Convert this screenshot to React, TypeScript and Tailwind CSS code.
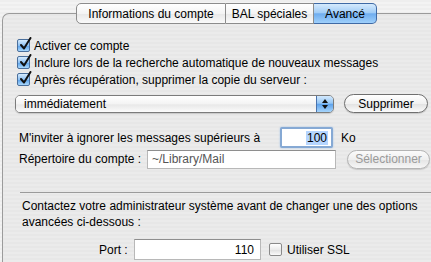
import React from "react";

const font = "font-['Liberation_Sans',Arial,sans-serif]";

const Check: React.FC<{ checked: boolean }> = ({ checked }) => (
  <span
    className={
      "relative inline-block w-[13px] h-[13px] rounded-[2px] border shrink-0 " +
      (checked
        ? "border-[#4a6f9c] bg-[linear-gradient(to_bottom,#d6ebfd,#8fc2f4_50%,#5ea4ec_55%,#a9d8fc)]"
        : "border-[#8a8a8a] bg-[linear-gradient(to_bottom,#ffffff,#ececec_50%,#e0e0e0_55%,#fafafa)]")
    }
  >
    {checked && (
      <svg className="absolute left-[1px] -top-[3px]" width="13" height="14" viewBox="0 0 13 14">
        <path d="M2 8 L5 11.5 L11.5 1" fill="none" stroke="#111" strokeWidth="2" strokeLinecap="round" strokeLinejoin="round" />
      </svg>
    )}
  </span>
);

const Row: React.FC<{ label: string }> = ({ label }) => (
  <div className="flex items-center h-[17px] pl-[14px]">
    <Check checked />
    <span className="ml-[4px] text-black">{label}</span>
  </div>
);

const PillButton: React.FC<{ label: string; disabled?: boolean; className?: string }> = ({ label, disabled, className }) => (
  <div
    className={
      "flex items-center justify-center rounded-full border shadow-[0_1px_1px_rgba(0,0,0,0.15)] " +
      (disabled
        ? "border-[#b4b4b4] text-[#9a9a9a] bg-[linear-gradient(to_bottom,#fbfbfb,#efefef_50%,#e6e6e6_55%,#f6f6f6)] "
        : "border-[#6f6f6f] text-black bg-[linear-gradient(to_bottom,#ffffff,#f1f1f1_50%,#e3e3e3_55%,#fbfbfb)] ") +
      (className ?? "")
    }
  >
    {label}
  </div>
);

export default function App() {
  return (
    <div
      className={
        "w-[431px] h-[262px] overflow-hidden text-[12px] leading-none text-black " +
        font +
        " bg-[repeating-linear-gradient(to_bottom,#eeeeee_0px,#eeeeee_2px,#f3f3f3_2px,#f3f3f3_4px)]"
      }
    >
      {/* tabs */}
      <div className="relative z-10 mt-[3px] ml-[76px] flex h-[21px]">
        <div className="flex items-center justify-center w-[150px] border border-[#8c8c8c] rounded-l-[5px] bg-[linear-gradient(to_bottom,#ffffff,#f4f4f4_50%,#e9e9e9_55%,#fafafa)]">
          Informations du compte
        </div>
        <div className="flex items-center justify-center w-[88px] border-y border-r border-[#8c8c8c] bg-[linear-gradient(to_bottom,#ffffff,#f4f4f4_50%,#e9e9e9_55%,#fafafa)]">
          BAL spéciales
        </div>
        <div className="flex items-center justify-center w-[63px] border border-l-0 border-[#3f6aa5] rounded-r-[5px] bg-[linear-gradient(to_bottom,#d5eafd,#a2cdf6_45%,#6fadef_52%,#9fd0fb)]">
          Avancé
        </div>
      </div>

      {/* panel */}
      <div className="-mt-[11px] ml-[2px] w-[450px] h-[260px] border-t border-l border-[#9b9b9b] rounded-tl-[7px] bg-[repeating-linear-gradient(to_bottom,#e7e7e7_0px,#e7e7e7_2px,#ebebeb_2px,#ebebeb_4px)]">
        <div className="pt-[23px]">
          <Row label="Activer ce compte" />
          <Row label="Inclure lors de la recherche automatique de nouveaux messages" />
          <Row label="Après récupération, supprimer la copie du serveur :" />
        </div>

        {/* popup + button */}
        <div className="mt-[6px] flex items-center pl-[12px] h-[19px]">
          <div className="flex h-[18px] w-[319px] rounded-[5px] border border-[#7b7b7b] overflow-hidden shadow-[0_1px_1px_rgba(0,0,0,0.15)]">
            <div className="flex-1 flex items-center pl-[8px] bg-[linear-gradient(to_bottom,#ffffff,#f3f3f3_50%,#e8e8e8_55%,#fbfbfb)]">
              immédiatement
            </div>
            <div className="w-[17px] flex flex-col items-center justify-center gap-[2px] border-l border-[#4a73ad] bg-[linear-gradient(to_bottom,#d3e9fd,#94c6f5_45%,#5fa3ec_52%,#a5d4fb)]">
              <svg width="6" height="4" viewBox="0 0 6 4"><path d="M0 4 L3 0 L6 4Z" fill="#111" /></svg>
              <svg width="6" height="4" viewBox="0 0 6 4"><path d="M0 0 L3 4 L6 0Z" fill="#111" /></svg>
            </div>
          </div>
          <PillButton label="Supprimer" className="ml-[10px] w-[84px] h-[19px]" />
        </div>

        {/* size limit */}
        <div className="mt-[14px] flex items-center h-[21px] pl-[16px]">
          <span className="w-[261px]">M'inviter à ignorer les messages supérieurs à</span>
          <div className="w-[53px] h-[21px] rounded-[2px] border-[2px] border-[#86a9d4] shadow-[0_0_2px_#9fc0e8] bg-white flex items-center justify-end pr-[3px]">
            <span className="bg-[#b5d5ff] px-[1px] leading-[14px]">100</span>
          </div>
          <span className="ml-[8px]">Ko</span>
        </div>

        {/* directory */}
        <div className="mt-[1px] flex items-center h-[20px] pl-[16px]">
          <span className="w-[128px]">Répertoire du compte :</span>
          <div className="w-[189px] h-[19px] border border-[#b8b8b8] border-t-[#8e8e8e] bg-white flex items-center pl-[4px] text-[#555]">
            ~/Library/Mail
          </div>
          <PillButton label="Sélectionner" disabled className="ml-[11px] w-[83px] h-[19px]" />
        </div>

        {/* separator */}
        <div className="mt-[23px] ml-[17px] h-px bg-[#9a9a9a]" />

        <p className="mt-[5px] pl-[19px] leading-[16px] whitespace-nowrap">
          Contactez votre administrateur système avant de changer une des options
          <br />
          avancées ci-dessous :
        </p>

        {/* port */}
        <div className="mt-[9px] flex items-center h-[21px] pl-[96px]">
          <span className="w-[35px]">Port :</span>
          <div className="w-[127px] h-[21px] border border-[#b8b8b8] border-t-[#8e8e8e] bg-white flex items-center justify-end pr-[6px]">
            110
          </div>
          <span className="ml-[8px] flex items-center">
            <Check checked={false} />
            <span className="ml-[5px]">Utiliser SSL</span>
          </span>
        </div>
      </div>
    </div>
  );
}
